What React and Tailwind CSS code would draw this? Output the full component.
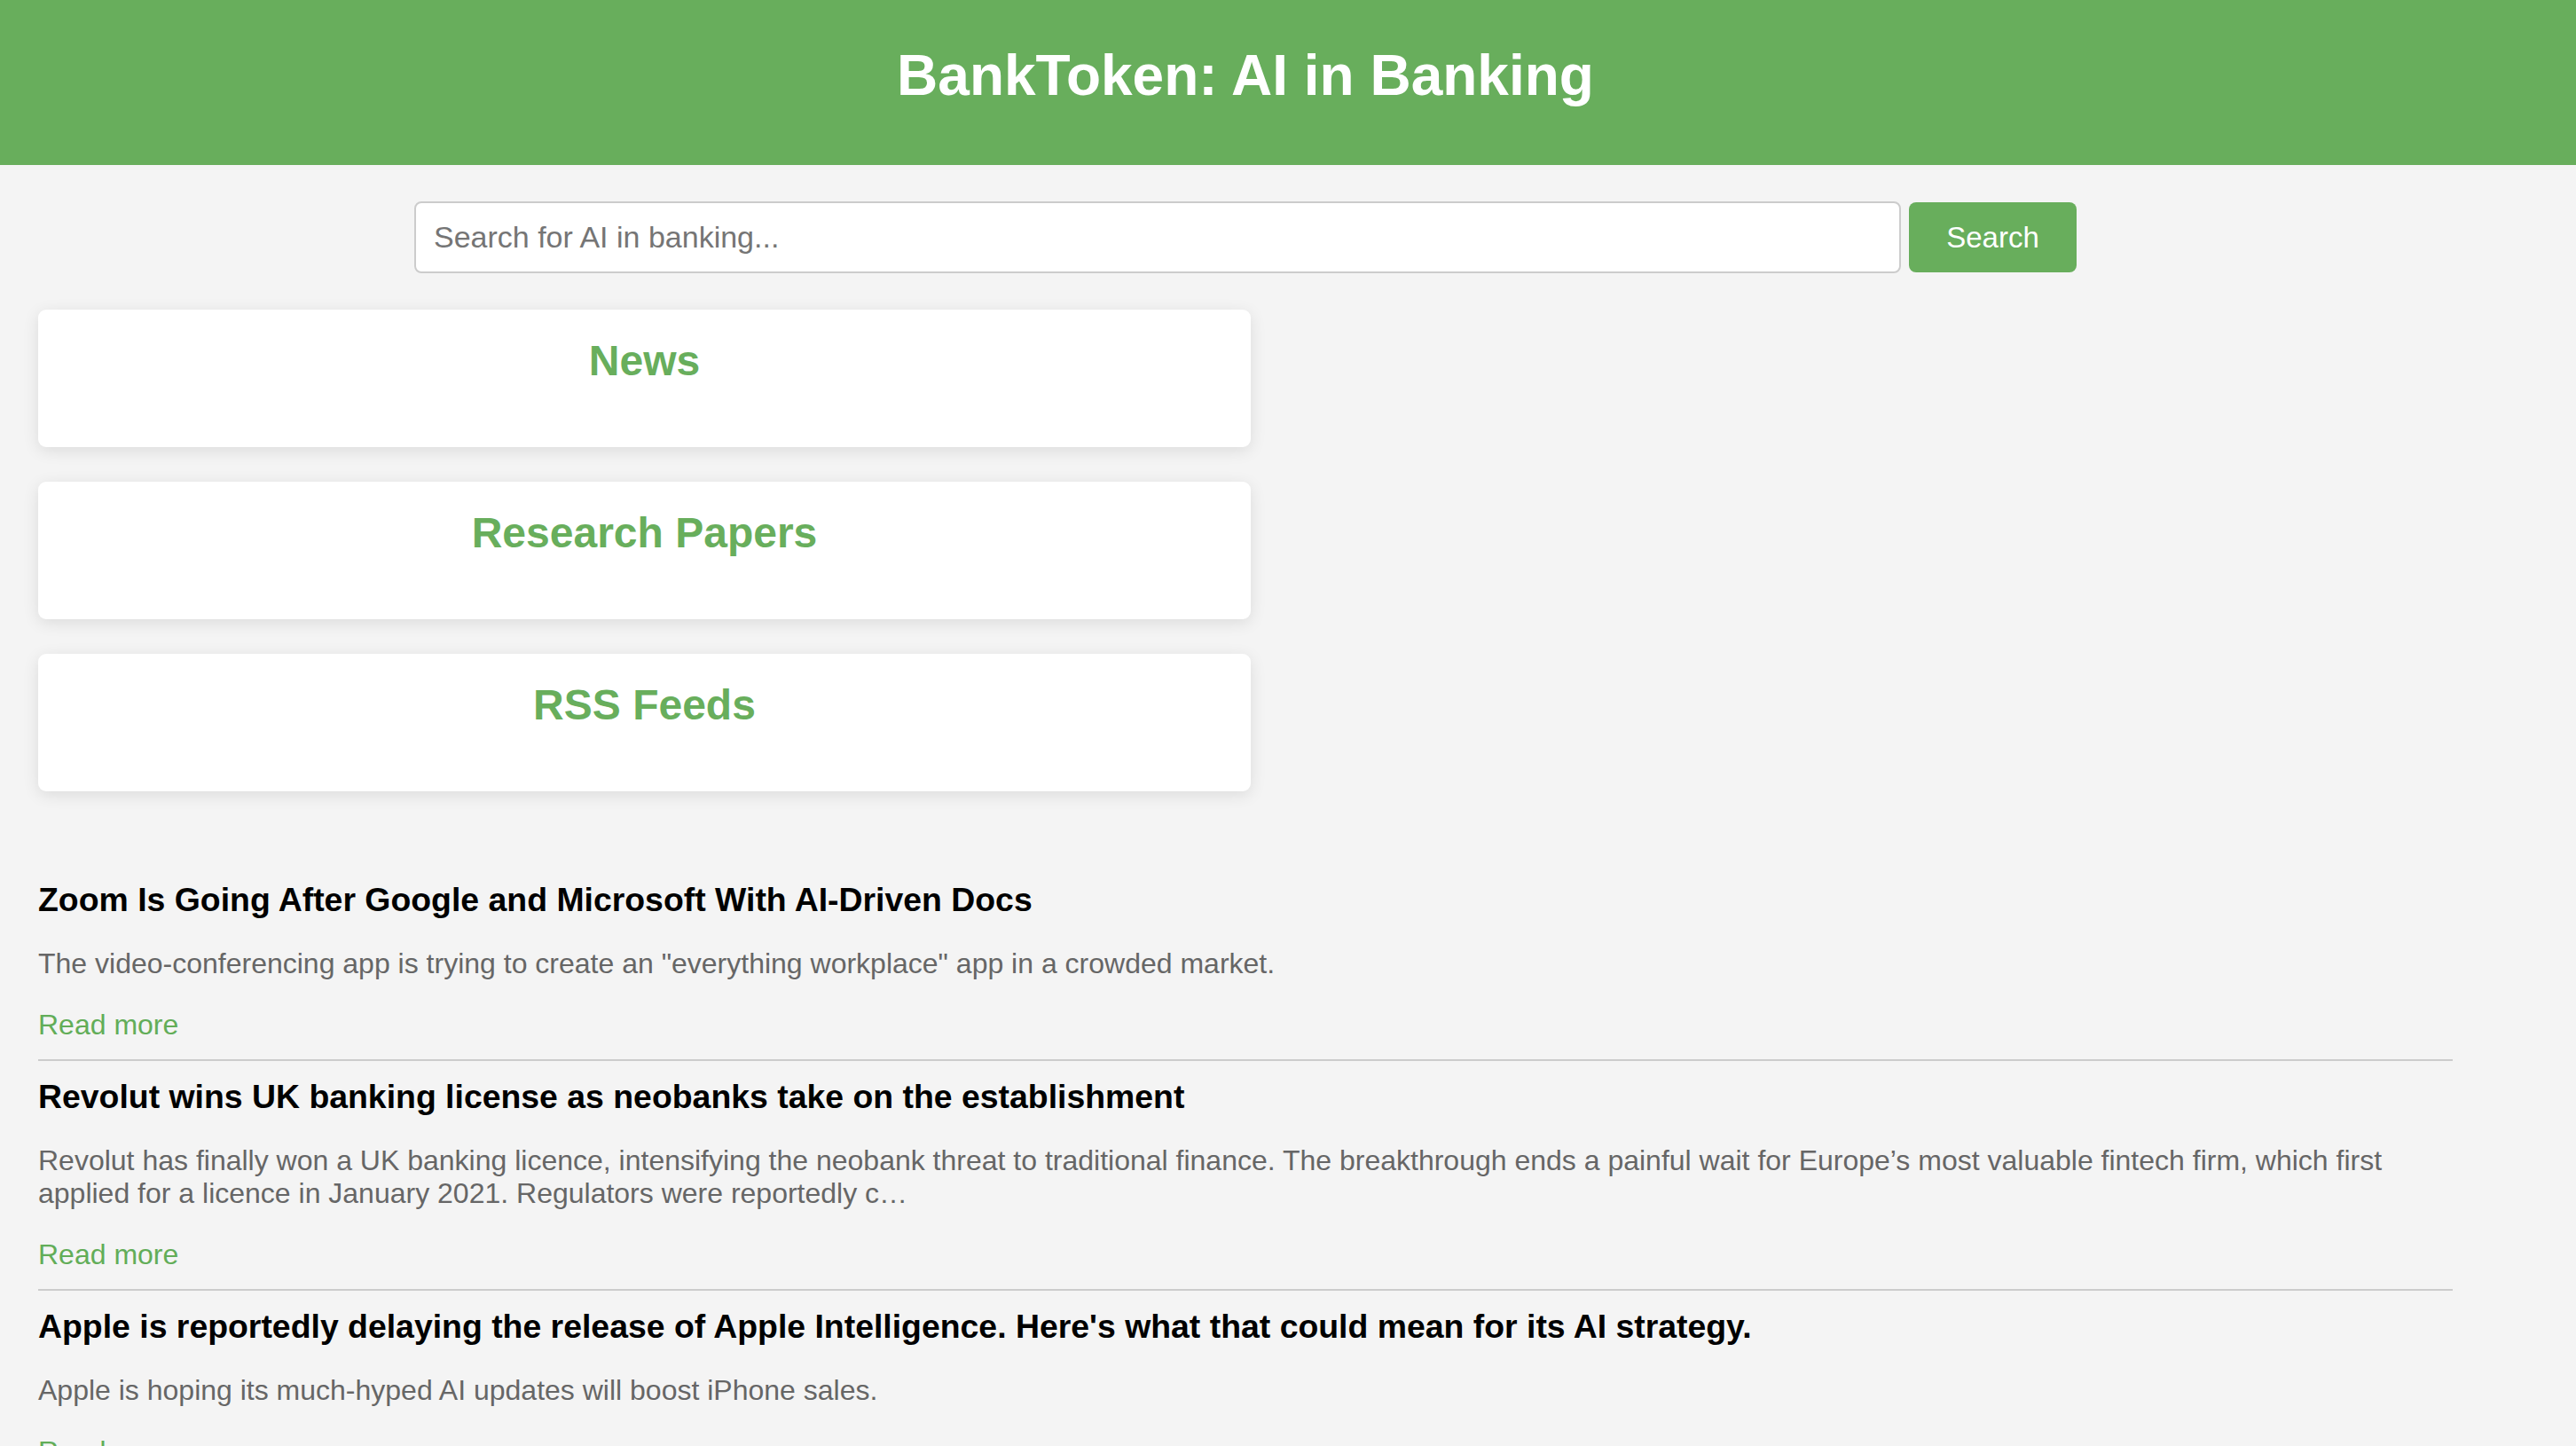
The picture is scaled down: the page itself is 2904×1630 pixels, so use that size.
import { useState } from 'react';

const articles = [
  {
    title: 'Zoom Is Going After Google and Microsoft With AI-Driven Docs',
    description:
      'The video-conferencing app is trying to create an "everything workplace" app in a crowded market.',
  },
  {
    title: 'Revolut wins UK banking license as neobanks take on the establishment',
    description:
      'Revolut has finally won a UK banking licence, intensifying the neobank threat to traditional finance. The breakthrough ends a painful wait for Europe’s most valuable fintech firm, which first applied for a licence in January 2021. Regulators were reportedly c…',
  },
  {
    title:
      "Apple is reportedly delaying the release of Apple Intelligence. Here's what that could mean for its AI strategy.",
    description: 'Apple is hoping its much-hyped AI updates will boost iPhone sales.',
  },
];

const sections = ['News', 'Research Papers', 'RSS Feeds'];

const SectionCard = ({ title }) => (
  <div className="h-[155px] rounded-[9px] bg-white pt-[30px] text-center shadow-[0_4px_18px_rgba(0,0,0,0.1)]">
    <h2 className="text-[48px] leading-[normal] font-bold text-[#68ae5c]">{title}</h2>
  </div>
);

const ArticleItem = ({ title, description }) => (
  <div className="border-b-2 border-[#cccccc] pt-[19px] pb-[20px] text-[32px] leading-[normal]">
    <h3 className="text-[37.4px] leading-[normal] font-bold text-black">{title}</h3>
    <p className="my-[32px] text-[32px] leading-[normal] text-[#666666]">{description}</p>
    <a href="#" className="block text-[32px] leading-[normal] text-[#62ad58]">
      Read more
    </a>
  </div>
);

const App = () => {
  const [query, setQuery] = useState('');

  return (
    <div
      className="min-h-screen bg-[#f4f4f4] pb-10"
      style={{ fontFamily: '"Liberation Sans", Arial, Helvetica, sans-serif' }}
    >
      <header className="h-[186px] bg-[#68ae5c] pt-[48px] pr-[96px] text-center">
        <h1 className="text-[64px] leading-[normal] font-bold text-white">BankToken: AI in Banking</h1>
      </header>

      {/* search bar */}
      <form
        onSubmit={(e) => e.preventDefault()}
        className="mt-[41px] flex items-center gap-[9px] pl-[467px]"
      >
        <input
          value={query}
          onChange={(e) => setQuery(e.target.value)}
          placeholder="Search for AI in banking..."
          className="h-[81px] w-[1676px] rounded-[8px] border-2 border-[#cccccc] bg-white px-[20px] text-[34px] text-[#333] placeholder:text-[#757575] focus:outline-none"
        />
        <button
          type="submit"
          className="h-[79px] w-[189px] rounded-[8px] bg-[#68ae5c] text-[33px] text-white"
        >
          Search
        </button>
      </form>

      {/* sections */}
      <div className="mt-[41px] flex w-[1410px] flex-col gap-[39px] pl-[43px]">
        {sections.map((s) => (
          <SectionCard key={s} title={s} />
        ))}
      </div>

      {/* articles */}
      <div className="mt-[82px] ml-[43px] w-[2722px]">
        {articles.map((a) => (
          <ArticleItem key={a.title} title={a.title} description={a.description} />
        ))}
      </div>
    </div>
  );
};

export default App;
